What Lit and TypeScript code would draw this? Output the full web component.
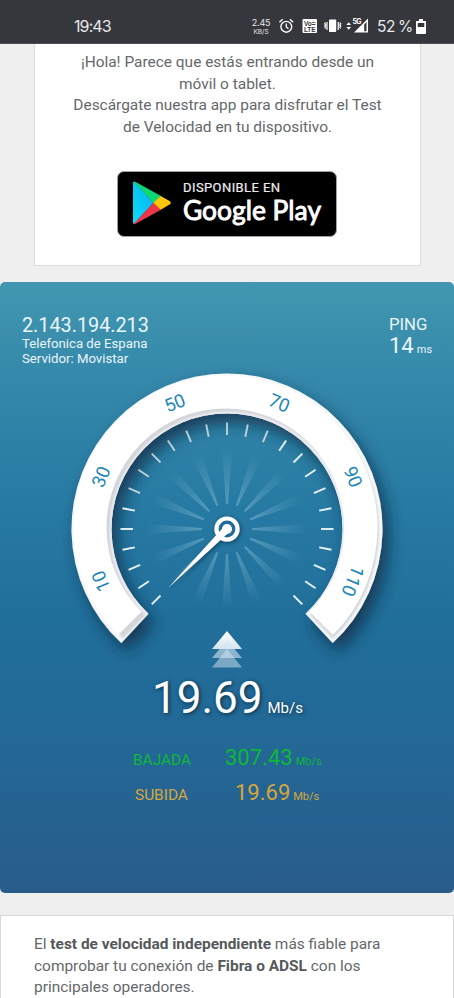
import { LitElement, html, svg, css } from "lit";
import { customElement } from "lit/decorators.js";

const polar = (r: number, deg: number) => {
  const a = (deg * Math.PI) / 180;
  return `${(r * Math.sin(a)).toFixed(2)} ${(-r * Math.cos(a)).toFixed(2)}`;
};
const band = (inner: number, outer: number, end: number) =>
  `M${polar(outer, -end)}A${outer} ${outer} 0 1 1 ${polar(outer, end)}L${polar(inner, end)}A${inner} ${inner} 0 1 0 ${polar(inner, -end)}Z`;

@customElement("status-bar")
class StatusBar extends LitElement {
  static styles = css`
    :host { display: flex; box-sizing: border-box; height: 44px; padding: 9px 28px 0 74px; background: #35373c; color: #e8e8ea; align-items: center; justify-content: space-between; font: 16px Inter, sans-serif; border-bottom: 1px solid #4a4c4f; }
    .time { letter-spacing: -0.9px; }
    .right { display: flex; align-items: center; }
    .rate { display: flex; flex-direction: column; align-items: center; font-size: 9px; line-height: 11px; width: 20px; letter-spacing: -0.2px; }
    .unit { font-size: 6.5px; line-height: 8px; letter-spacing: 0; margin-top: -1px; padding-top: 1px; }
    .icons { display: block; }
    .signal { display: block; margin-left: -9px; }
    .v { font: 700 6.5px "Liberation Sans", sans-serif; fill: #35373c; }
    .g { font: 700 7px Inter, sans-serif; fill: #fff; }
    .pct { width: 39px; font-size: 15.5px; letter-spacing: -0.4px; word-spacing: -1px; white-space: nowrap; margin-left: 9px; }
  `;
  render() {
    return html`<span class="time">19:43</span>
      <div class="right">
        <div class="rate"><span>2.45</span><span class="unit">KB/S</span></div>
        <svg class="icons" width="92" height="20" viewBox="271 16 92 20" fill="none" stroke="#fff">
          <circle cx="286.3" cy="26.8" r="5.4" stroke-width="1.4" />
          <path d="M286.3 23.5v3.5l2.2 1.6M279.4 22.2l3.3-2.9M293.2 22.2l-3.3-2.9" stroke-width="1.3" />
          <rect x="302.5" y="19" width="14.5" height="14" rx="1" fill="#fff" stroke="none" />
          <text class="v" stroke="none" x="304" y="25.5" textLength="11.5">Vo=</text>
          <text class="v" stroke="none" x="304" y="31.8" textLength="11.5">LTE</text>
          <rect x="329" y="19.5" width="7.2" height="12.5" rx="0.8" fill="#fff" stroke="none" />
          <path d="M327 22v8M338.2 22v8M325.6 22.5l-.9 1.2.9 1.2-.9 1.2.9 1.2-.9 1.2M339.8 22.5l.9 1.2-.9 1.2.9 1.2-.9 1.2.9 1.2" stroke-width="1.2" />
          <path d="M346.4 25l2.3-2.7 2.3 2.7zM346.4 27l2.3 2.7 2.3-2.7z" fill="#fff" stroke="none" />
          <text class="g" stroke="none" x="352.6" y="23.5" textLength="9">5G</text>
        </svg>
        <svg class="signal" width="14" height="18" viewBox="354 17 14 18" fill="none">
          <path d="M354 32.5L368 18.5v14z" fill="#fff" />
          <path d="M364.2 24.500v6.700h2.300V22z" fill="#35373c" />
        </svg>
        <span class="pct">52 %</span>
        <svg width="10" height="17" viewBox="0 0 10 17">
          <path d="M3 1h4v2h2.200q.8 0 .8.8V15q0 1-1 1H1q-1 0-1-1V3.800Q0 3 .8 3H3z" fill="#fff" />
          <path d="M1.700 5h6.600v4H1.700z" fill="#35373c" />
        </svg>
      </div>`;
  }
}

@customElement("store-badge")
class StoreBadge extends LitElement {
  static styles = css`
    :host { display: flex; box-sizing: border-box; width: 220px; height: 66px; background: #000; border: 1.5px solid #a0a0a0; border-radius: 7px; color: #fff; }
    svg { display: block; }
    .small { font: 400 13px Roboto, sans-serif; fill: #eee; stroke: #eee; stroke-width: .2; }
    .big { font: 400 26px Lato, sans-serif; fill: #fff; stroke: #fff; stroke-width: .9; }
  `;
  render() {
    return html`<svg width="217" height="63" viewBox="118.500 173 217 63">
      <defs>
        <linearGradient id="b" x1="1" x2="0" y1="0" y2="1"><stop stop-color="#0ab0f0" /><stop offset="1" stop-color="#08dcf8" /></linearGradient>
      </defs>
      <path d="M133.500 184q0-1.500 1.300-1.200L154 203.700 134.800 224.800q-1.300.3-1.300-1.200z" fill="url(#b)" />
      <path d="M134 182.600q1-.4 2.200.3L161.500 197 154 204z" fill="#0fd873" />
      <path d="M134 225q1 .4 2.200-.3L161.500 210.700 154 203.700z" fill="#ef3648" />
      <path d="M161.200 196.900L170 202q2.600 1.800 0 3.600l-8.800 5.200-7.400-7z" fill="#ffc60a" />
      <text class="small" x="183.500" y="193" textLength="97">DISPONIBLE EN</text>
      <text class="big" x="183.500" y="220.800" textLength="138" lengthAdjust="spacingAndGlyphs">Google Play</text>
    </svg>`;
  }
}

@customElement("speed-gauge")
class SpeedGauge extends LitElement {
  static styles = css`
    :host { display: block; height: 298px; }
    svg { display: block; margin: 0 auto; overflow: visible; }
    .lbl { font: 18.5px Roboto, sans-serif; fill: #1d87b8; text-anchor: middle; }
  `;
  render() {
    const ticks = Array.from({ length: 25 }, (_, i) => -135 + i * 11.25);
    const rays = Array.from({ length: 16 }, (_, i) => i * 22.5);
    const labels = [10, 30, 50, 70, 90, 110];
    return html`<svg width="312" height="310" viewBox="-156 -155 312 310">
      <defs>
        <filter id="drop" x="-20%" y="-20%" width="150%" height="150%"><feDropShadow dx="6" dy="9" stdDeviation="8" flood-color="#0e2c42" flood-opacity=".75" /></filter>
        <filter id="soft" x="-10%" y="-10%" width="120%" height="120%"><feGaussianBlur stdDeviation="1" /></filter>
        <filter id="hub" x="-50%" y="-50%" width="200%" height="200%"><feDropShadow dx="1" dy="1.500" stdDeviation="2" flood-color="#062f4d" flood-opacity=".7" /></filter>
        <radialGradient id="ray" gradientUnits="userSpaceOnUse" cx="0" cy="0" r="80">
          <stop offset=".25" stop-color="#a6d4ea" stop-opacity=".42" /><stop offset=".6" stop-color="#a6d4ea" stop-opacity=".2" /><stop offset="1" stop-color="#a6d4ea" stop-opacity="0" />
        </radialGradient>
        <linearGradient id="tri" x1="0" x2="0" y1="0" y2="1"><stop stop-color="#fff" /><stop offset="1" stop-color="#d5e5ef" /></linearGradient>
        <clipPath id="face"><path d=${band(115.5, 155.5, 137)} /></clipPath>
      </defs>
      <path d=${band(115.5, 155.5, 137.2)} fill="#f7f8fa" filter="url(#drop)" />
      <g clip-path="url(#face)">
        <path d=${band(118, 151, 136)} fill="#d3d5da" transform="translate(1 1)" filter="url(#soft)" />
        <path d=${band(115.5, 117, 138)} fill="#e6e8ec" />
        <path d=${band(119, 152, 135)} fill="#fff" transform="translate(-1.500 -1.500)" />
      </g>
      ${rays.map((a) => svg`<path d="M-.9 -25L-5 -78H5L.9 -25z" fill="url(#ray)" transform="rotate(${a})" />`)}
      ${ticks.map((a) => svg`<path d="M0 -94V-106.500" stroke="#e8f1f4" stroke-width="1.900" stroke-opacity=${Math.abs(a + 22) < 50 ? 0.75 : 1} transform="rotate(${a})" />`)}
      ${labels.map((n, i) => svg`<text class="lbl" y="-130" transform="rotate(${-112.5 + i * 45})">${n}</text>`)}
      <g filter="url(#hub)">
        <circle r="10.500" fill="#206b98" stroke="#fff" stroke-width="4.200" />
        <circle r="5" fill="#fff" />
        <path d="M-3.800 -1.500L-59 59L1.500 3.800z" fill="#fff" />
      </g>
      <path d="M0 102L15 120H-15z" fill="url(#tri)" />
      <path d="M0 111L15 129H-15z" fill="#d6e6f1" fill-opacity=".6" />
      <path d="M0 120L15 138.500H-15z" fill="#d6e6f1" fill-opacity=".5" />
    </svg>`;
  }
}

@customElement("app-root")
class AppRoot extends LitElement {
  static styles = css`
    :host { display: block; height: 998px; overflow: hidden; background: #efefef; font-family: Roboto, sans-serif; color: #64686b; }
    .promo { box-sizing: border-box; margin: 0 33px 0 34px; height: 222px; background: #fff; border: 1px solid #dcdcdc; border-top: 0; text-align: center; padding-top: 8px; font-size: 15.45px; line-height: 21.7px; }
    .line { white-space: nowrap; }
    .promo store-badge { margin: 32px auto 0 82px; }
    .panel { box-sizing: border-box; margin-top: 16px; height: 611px; border-radius: 5px; padding-top: 33px; color: #eaf5fa; background: linear-gradient(#4297b0 0, #3488aa 16%, #2679a2 38%, #206f9a 55%, #236896 75%, #285c8b 100%); }
    .head { display: flex; justify-content: space-between; padding: 0 21px 0 22px; height: 59px; }
    .ip { font-size: 19.8px; line-height: 22px; }
    .isp { font-size: 13.2px; line-height: 14.6px; }
    .ping { width: 44px; white-space: nowrap; }
    .pl { font-size: 16.7px; line-height: 20px; }
    .pv { font-size: 22px; line-height: 22px; }
    .ms { font-size: 11px; margin-left: 3px; }
    .speed { display: flex; align-items: baseline; padding-left: 152px; height: 72px; line-height: 52px; color: #fff; text-shadow: 1px 1px 4px #082c44; }
    .num { font-size: 44px; letter-spacing: 0; }
    .mb { font-size: 15px; margin-left: 5px; }
    .row { display: grid; grid-template-columns: 58px auto auto 1fr; align-items: baseline; height: 35px; line-height: 28px; }
    .down { color: #10b73a; padding-left: 133px; }
    .up { color: #d6a63c; padding-left: 135px; }
    .k { font-size: 15.4px; }
    .n { font-size: 22px; margin-left: 34px; }
    .up .n { margin-left: 42px; }
    .u { font-size: 11px; margin-left: 3px; }
    .info { box-sizing: border-box; margin: 22px 0 0 0; height: 110px; background: #fff; border: 1px solid #d8d8d8; padding: 18px 0 0 33px; font-size: 15.45px; line-height: 21.7px; }
    b { color: #55595b; font-weight: 700; }
  `;
  render() {
    return html`<status-bar></status-bar>
      <section class="promo">
        <div class="line">¡Hola! Parece que estás entrando desde un</div>
        <div class="line">móvil o tablet.</div>
        <div class="line">Descárgate nuestra app para disfrutar el Test</div>
        <div class="line">de Velocidad en tu dispositivo.</div>
        <store-badge></store-badge>
      </section>
      <section class="panel">
        <div class="head">
          <div><div class="ip">2.143.194.213</div><div class="isp">Telefonica de Espana</div><div class="isp">Servidor: Movistar</div></div>
          <div class="ping"><div class="pl">PING</div><div class="pv">14<span class="ms">ms</span></div></div>
        </div>
        <speed-gauge></speed-gauge>
        <div class="speed"><span class="num">19.69</span><span class="mb">Mb/s</span></div>
        <div class="row down"><span class="k">BAJADA</span><span class="n">307.43</span><span class="u">Mb/s</span></div>
        <div class="row up"><span class="k">SUBIDA</span><span class="n">19.69</span><span class="u">Mb/s</span></div>
      </section>
      <section class="info">
        <div class="line">El <b>test de velocidad independiente</b> más fiable para</div>
        <div class="line">comprobar tu conexión de <b>Fibra o ADSL</b> con los</div>
        <div class="line">principales operadores.</div>
      </section>`;
  }
}
